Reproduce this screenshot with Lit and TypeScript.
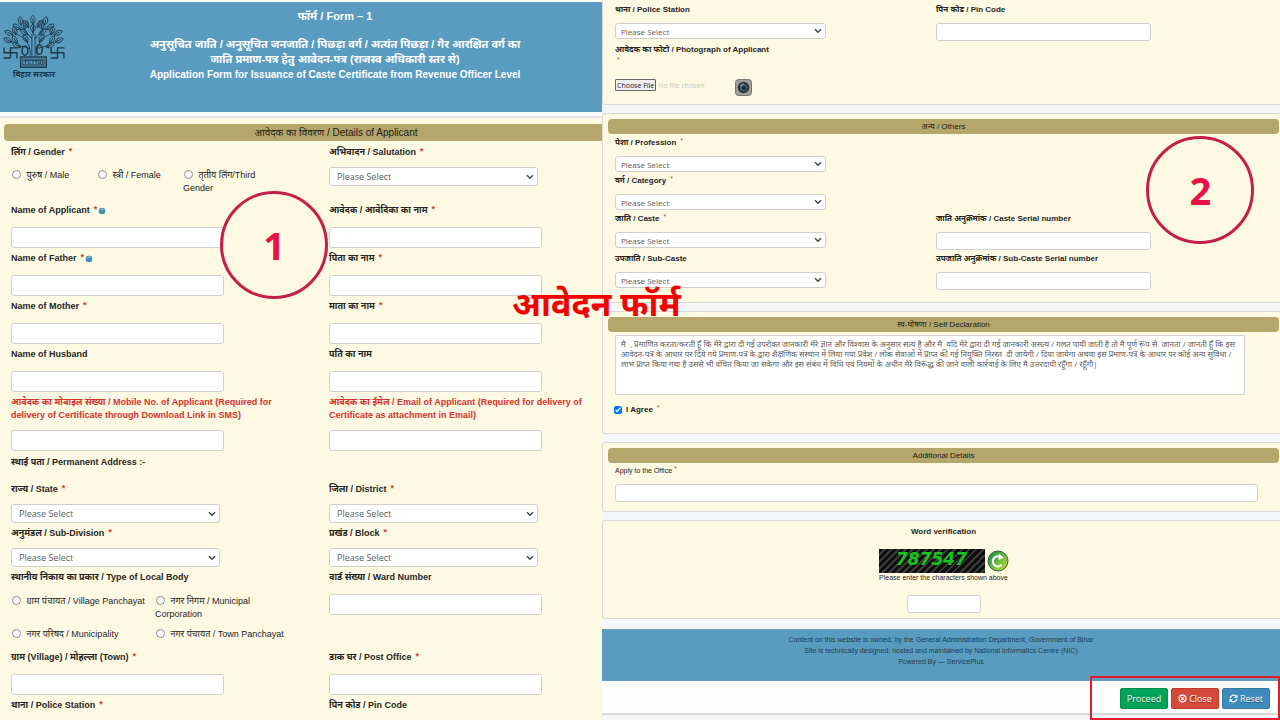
import { LitElement, html, css, svg, nothing } from "lit";
import { customElement } from "lit/decorators.js";
import { classMap } from "lit/directives/class-map.js";

type Kind = "select" | "text" | "none";

interface Field {
  id: string;
  text: string;
  kind: Kind;
  required?: boolean;
  help?: boolean;
  alert?: boolean;
}

const NAME_ROWS: Field[] = [
  { id: "applicant-en", text: "Name of Applicant", kind: "text", required: true, help: true },
  { id: "applicant-hi", text: "आवेदक / आवेदिका का नाम", kind: "text", required: true },
  { id: "father-en", text: "Name of Father", kind: "text", required: true, help: true },
  { id: "father-hi", text: "पिता का नाम", kind: "text", required: true },
  { id: "mother-en", text: "Name of Mother", kind: "text", required: true },
  { id: "mother-hi", text: "माता का नाम", kind: "text", required: true },
  { id: "husband-en", text: "Name of Husband", kind: "text" },
  { id: "husband-hi", text: "पति का नाम", kind: "text" },
  { id: "mobile", text: "आवेदक का मोबाइल संख्या / Mobile No. of Applicant (Required for delivery of Certificate through Download Link in SMS)", kind: "text", alert: true },
  { id: "email", text: "आवेदक का ईमेल / Email of Applicant (Required for delivery of Certificate as attachment in Email)", kind: "text", alert: true },
];

const ADDRESS_ROWS: Field[] = [
  { id: "state", text: "राज्य / State", kind: "select", required: true },
  { id: "district", text: "जिला / District", kind: "select", required: true },
  { id: "subdivision", text: "अनुमंडल / Sub-Division", kind: "select", required: true },
  { id: "block", text: "प्रखंड / Block", kind: "select", required: true },
];

const GENDERS = ["पुरुष / Male", "स्त्री / Female", "तृतीय लिंग/Third Gender"];

const BODIES = [
  "ग्राम पंचायत / Village Panchayat",
  "नगर निगम / Municipal Corporation",
  "नगर परिषद / Municipality",
  "नगर पंचायत / Town Panchayat",
];

const DECLARATION =
  "मै  , प्रमाणित करता/करती हूँ कि मेरे द्वारा दी गई उपरोक्त जानकारी मेरे ज्ञान और विश्वास के अनुसार सत्य है और मै  यदि मेरे द्वारा दी गई जानकारी असत्य / गलत पायी जाती है तो मै पूर्ण रूप से  जानता / जानती हूँ कि इस आवेदन-पत्र के आधार पर दिये गये प्रमाण-पत्र के द्वारा शैक्षणिक संस्थान में लिया गया प्रवेश / लोक सेवाओं में प्राप्त की गई नियुक्ति निरस्त  दी जायेगी / दिया जायेगा अथवा इस प्रमाण-पत्र के आधार पर कोई अन्य सुविधा / लाभ प्राप्त किया गया है उससे भी वंचित किया जा सकेगा और इस संबंध में विधि एवं नियमों के अधीन मेरे विरूद्ध की जाने वाली कार्रवाई के लिए मै उत्तरदायी रहूँगा / रहूँगी|";

const star = html`<span class="star">*</span>`;

function field(f: Field) {
  return html`<div class=${classMap({ field: true, alert: !!f.alert })}>
    <label for=${f.id}>${f.text}${f.required ? star : nothing}${f.help
        ? html`<svg class="help" viewBox="0 0 8 8"><circle cx="4" cy="4" r="3.300" fill="#3d8fb5" /><path d="M2.300 3.400a1.800 1.800 0 0 1 3.200-.5" fill="none" stroke="#b6dcea" /></svg>`
        : nothing}</label>
    ${f.kind === "select"
      ? html`<select id=${f.id}><option>Please Select</option></select>`
      : f.kind === "text"
        ? html`<input id=${f.id} type="text" />`
        : nothing}
  </div>`;
}

const leaf = (x: number, y: number, a: number) =>
  svg`<path d="M0 0C-3 -2.400 -2.600 -5.500 0 -8C2.600 -5.500 3 -2.400 0 0ZM0 0V-5" transform="translate(${x} ${y}) rotate(${a})" />`;

const LEAVES: [number, number, number][] = [
  [29, 14, 0], [25, 17, -40], [33, 17, 38], [24, 24, -55], [35, 24, 52], [29, 22, 0],
  [18, 15, -10], [17, 19, -55], [21, 19, 20], [40, 15, 12], [42, 19, 55], [38, 19, -20],
  [10, 24, -65], [13, 24, -15], [49, 24, 65], [46, 24, 15],
  [9, 31, -65], [14, 32, -30], [50, 31, 65], [45, 32, 30],
  [17, 36, -60], [42, 36, 60], [24, 31, -30], [35, 31, 30],
];

const emblem = html`<svg class="emblem" viewBox="1 5 58 51" role="img" aria-label="Bihar Sarkar">
  <g fill="none" stroke="#183848" stroke-width="0.800" stroke-linecap="round">
    ${LEAVES.map(([x, y, a]) => leaf(x, y, a))}
    <path d="M26 44C27 38 26 33 20 27L11 22M33 44C32 38 34 33 39 27L48 22M28 44V24M31 44V24M29.500 24V14M26 37L15 34M33 37L44 34M28 28L18 17M31 28L41 17" />
    <ellipse cx="21.500" cy="39" rx="2.700" ry="4.400" stroke-width="1.400" />
    <ellipse cx="35" cy="38" rx="2.700" ry="4.400" stroke-width="1.400" />
    <path d="M2 36.500V41H14M8 36.500H14M2 46H8M8 36.500V46M14 41V46" stroke-width="1.300" />
    <path d="M46 36.500V41H58M52 36.500H58M46 46H52M52 36.500V46M58 41V46" stroke-width="1.300" />
    <rect x="17.500" y="45" width="24" height="9.500" stroke-width="1.300" />
    <rect x="19.500" y="47" width="20" height="5.500" />
    <path d="M21 48.500H38M22 48.500V51.500M25 48.500V51.500H27M29 48.500V51.500M32 48.500V51.500M34 48.500V51.500H36V48.500M38 48.500V51.500" />
  </g>
</svg>`;

@customElement("app-root")
export class AppRoot extends LitElement {
  static styles = css`
    :host { display: block; }
    * { box-sizing: border-box; }
    .page {
      position: relative;
      display: grid;
      grid-template-columns: minmax(0, 602fr) minmax(0, 678fr);
      height: 100vh;
      min-height: 720px;
      overflow: hidden;
      background: #fdfdfd;
      color: #26261f;
      font-family: "Liberation Sans", "Noto Sans", sans-serif;
    }
    .left, .right { min-width: 0; }
    .left { font-size: 9px; line-height: 13px; display: flex; flex-direction: column; padding-top: 2px; }
    .banner {
      display: grid;
      grid-template-columns: 68px 1fr;
      min-height: 110px;
      background: #5a9bc0;
      color: #fff;
    }
    .brand { display: flex; flex-direction: column; align-items: center; padding-top: 12px; color: #183848; font-size: 8px; line-height: 11px; font-weight: 700; }
    .emblem { width: 62px; height: 55px; }
    .headings { text-align: center; padding-top: 7px; font-size: 11px; line-height: 15px; font-weight: 700; }
    .headings h1, .headings h2 { margin: 0; font: inherit; }
    .headings h1 { padding-bottom: 13px; }
    .latin { font-size: 10px; }
    .applicant { flex: 1; margin-top: 4px; padding: 6px 0 0 4px; background: #fef9e3; border-top: 2px solid #e3e6e3; }
    .bar {
      margin: 0;
      background: #b5a76c;
      border-radius: 4px;
      text-align: center;
      font-weight: 400;
      color: #1c1a10;
    }
    .left .bar { border-radius: 4px 0 0 4px; font-size: 10px; line-height: 17px; padding-left: 66px; }
    .cols { display: grid; grid-template-columns: 318fr 273fr; padding-left: 7px; }
    .left .cols { padding-top: 5px; }
    .field { display: flex; flex-direction: column; align-items: flex-start; }
    label, .caption { font-weight: 700; }
    .star { color: #d0392b; font-size: 9px; line-height: 8px; font-weight: 700; margin-left: 4px; vertical-align: 1px; }
    .help { width: 8px; height: 8px; margin-left: 1px; vertical-align: -2px; }
    .alert label { color: #d6322c; max-width: 264px; }
    input[type="text"], select, textarea {
      font-family: "Open Sans", "Noto Sans", sans-serif;
      background-color: #fff;
      border: 1px solid #cfd0cc;
      border-radius: 3px;
      color: #5c5c5c;
      max-width: 100%;
    }
    select {
      appearance: none;
      padding: 0 7px;
      background-image: url("data:image/svg+xml,%3Csvg xmlns='http://www.w3.org/2000/svg' viewBox='0 0 8 6'%3E%3Cpath d='M1 1.300l3 3 3-3' fill='none' stroke='%23444' stroke-width='1.500'/%3E%3C/svg%3E");
      background-repeat: no-repeat;
      background-position: right 3px center;
      background-size: 8px 6px;
    }
    .left input[type="text"] { width: 213px; height: 21px; margin: 10px 0 4px; }
    .left .alert input[type="text"] { margin-top: 8px; }
    .left select { width: 209px; height: 19px; margin: 8px 0 4px; font-size: 9px; }
    .choices { border: 0; margin: 0; padding: 0; min-width: 0; }
    .choices legend { padding: 0; font-weight: 700; }
    .options { display: grid; padding-top: 10px; }
    .three { grid-template-columns: 86px 86px 76px; padding-bottom: 9px; }
    .two { grid-template-columns: 144px 140px; row-gap: 7px; padding-bottom: 10px; padding-top: 11px; }
    .options label { font-weight: 400; }
    input[type="radio"] { appearance: none; width: 9px; height: 9px; margin: 0 3px 0 1px; border: 1px solid #8d8d8d; border-radius: 50%; background: #fff; vertical-align: -1px; }
    .section-name { grid-column: 1 / -1; font-size: 9px; font-weight: 700; margin: 1px 0 14px; line-height: 13px; }

    .right { font-size: 8px; line-height: 12px; display: flex; flex-direction: column; gap: 8px; background: #f5f6f8; }
    .card { background: #fef9e3; border: 1px solid #d8d9d6; border-right: 0; border-radius: 3px 0 0 3px; padding: 5px 1px 0 5px; }
    .first { border-top: 0; padding-top: 4px; border-top-left-radius: 0; }
    .right .bar { font-size: 8px; line-height: 15px; }
    .right .cols { grid-template-columns: 321fr 343fr; padding-top: 3px; }
    .right .star { font-size: 7px; font-weight: 400; margin-left: 4px; vertical-align: 2px; }
    .right select { width: 211px; height: 16px; margin: 7px 0 3px; font-size: 8px; padding: 0 5px; }
    .right .cols input[type="text"] { width: 215px; height: 18px; margin: 7px 0 3px; }
    .right .first .cols { padding-top: 0; }
    .photo { grid-column: 1 / -1; padding: 0 0 8px; }
    .photo .star { display: block; margin-left: 2px; }
    .upload { display: flex; align-items: flex-start; gap: 8px; padding-top: 15px; }
    input[type="file"] { width: 112px; font: 7px "Open Sans", sans-serif; color: #c9c9c0; }
    input[type="file"]::file-selector-button { font: 7px "Open Sans", sans-serif; height: 12px; padding: 0 1px; margin: 0 2px 0 0; border: 1px solid #666; border-radius: 1px; background: #efefef; color: #222; }
    .camera { width: 17px; height: 17px; }
    .others { padding-bottom: 9px; }
    .others .field:nth-child(-n + 3) { grid-column: 1; }
    textarea { display: block; width: calc(100% - 41px); height: 60px; margin: 3px 0 8px 7px; padding: 3px 5px; resize: none; overflow: hidden; font-size: 8px; line-height: 10px; border-radius: 1px; }
    .agree { display: flex; align-items: center; padding: 1px 0 17px 6px; }
    .agree input { width: 8px; height: 8px; margin: 0 4px 0 0; }
    .office { display: block; font-size: 7px; font-weight: 400; padding: 2px 0 0 7px; }
    .right .office .star { margin-left: 2px; }
    .additional input[type="text"] { display: block; width: calc(100% - 28px); height: 18px; margin: 7px 0 9px 7px; }
    .captcha { display: flex; flex-direction: column; align-items: center; padding-bottom: 5px; }
    .captcha h3 { margin: 0; font-size: 8px; }
    .challenge { display: flex; align-items: center; gap: 2px; padding: 11px 0 0; }
    .code { width: 106px; height: 24px; display: grid; place-items: start center; background: repeating-linear-gradient(135deg, #0d0d0d 0 3px, #3b3b3b 3px 5px); color: #15c51c; font: italic 700 17px/21px "DejaVu Sans", sans-serif; }
    .refresh { border: 0; padding: 0; background: none; width: 22px; height: 22px; display: block; }
    .captcha label { font-weight: 400; font-size: 7px; line-height: 9px; }
    .captcha input[type="text"] { width: 74px; height: 18px; margin-top: 13px; }
    .foot { background: #fefefe; border-bottom: 2px solid #d9d9d9; margin-top: 2px; }
    .credits { background: #5a9bc0; border-top: 1px solid #6f9fb8; color: #1d3e50; text-align: center; font-size: 7px; line-height: 11px; padding: 4px 0 14px; }
    .credits p { margin: 0; }
    .actions { display: flex; justify-content: flex-end; gap: 3px; padding: 7px 10px 4px 0; }
    .actions button { display: flex; align-items: center; justify-content: center; gap: 2px; width: 48px; height: 21px; padding: 0; border: 1px solid; border-radius: 2px; color: #fff; font: 9px "Open Sans", sans-serif; text-shadow: 0 1px 1px #0006; }
    .go { background: #00a35a; border-color: #008d4c !important; }
    .close { background: #d5493a; border-color: #c23a2c !important; }
    .reset { background: #3f8bbd; border-color: #357ca5 !important; }
    .actions svg { width: 9px; height: 9px; }

    .mark { position: absolute; width: 108px; height: 108px; border: 3px solid #c41f48; border-radius: 50%; display: grid; place-items: center; color: #ea1144; font: 700 38px/50px "Open Sans", sans-serif; }
    .one { left: 17.200%; top: 191px; }
    .two-mark { right: 2%; top: 136px; }
    .title { position: absolute; left: 40%; top: 280px; margin: 0; color: #f50000; font: 700 34px/46px "Noto Sans", sans-serif; white-space: nowrap; }
    .frame { position: absolute; right: 0; bottom: 0; width: 190px; height: 44px; border: 2px solid #e31b2c; pointer-events: none; }
  `;

  render() {
    return html`<main class="page">
      <section class="left">
        <header class="banner">
          <div class="brand">${emblem}<span>बिहार सरकार</span></div>
          <div class="headings">
            <h1>फॉर्म / Form – 1</h1>
            <h2>अनुसूचित जाति / अनुसूचित जनजाति / पिछड़ा वर्ग / अत्यंत पिछड़ा / गैर आरक्षित वर्ग का<br />जाति प्रमाण-पत्र हेतु आवेदन-पत्र (राजस्व अधिकारी स्तर से)<br /><span class="latin">Application Form for Issuance of Caste Certificate from Revenue Officer Level</span></h2>
          </div>
        </header>
        <form class="applicant">
          <h2 class="bar">आवेदक का विवरण / Details of Applicant</h2>
          <div class="cols">
            <fieldset class="choices">
              <legend>लिंग / Gender${star}</legend>
              <div class="options three">
                ${GENDERS.map((g) => html`<label><input type="radio" name="gender" /> ${g}</label>`)}
              </div>
            </fieldset>
            ${field({ id: "salutation", text: "अभिवादन / Salutation", kind: "select", required: true })}
            ${NAME_ROWS.map(field)}
            <h3 class="section-name">स्थाई पता / Permanent Address :-</h3>
            ${ADDRESS_ROWS.map(field)}
            <fieldset class="choices">
              <legend>स्थानीय निकाय का प्रकार / Type of Local Body</legend>
              <div class="options two">
                ${BODIES.map((b) => html`<label><input type="radio" name="body" /> ${b}</label>`)}
              </div>
            </fieldset>
            ${field({ id: "ward", text: "वार्ड संख्या / Ward Number", kind: "text" })}
            ${field({ id: "village", text: "ग्राम (Village) / मोहल्ला (Town)", kind: "text", required: true })}
            ${field({ id: "post", text: "डाक घर / Post Office", kind: "text", required: true })}
            <div class="caption">थाना / Police Station${star}</div>
            <div class="caption">पिन कोड / Pin Code</div>
          </div>
        </form>
      </section>

      <section class="right">
        <div class="card first">
          <div class="cols">
            ${field({ id: "police", text: "थाना / Police Station", kind: "select" })}
            ${field({ id: "pin", text: "पिन कोड / Pin Code", kind: "text" })}
            <div class="photo">
              <label for="photo">आवेदक का फोटो / Photograph of Applicant${star}</label>
              <div class="upload">
                <input id="photo" type="file" />
                <svg class="camera" viewBox="0 0 17 17"><rect x="0.500" y="0.500" width="16" height="16" rx="3" fill="#a19d98" stroke="#77736f" /><circle cx="8.500" cy="8.500" r="5.800" fill="#27383f" /><circle cx="8.500" cy="8.500" r="3.500" fill="#426873" /><circle cx="9" cy="9" r="2" fill="#14272f" /><path d="M5.500 7a3.500 3.500 0 0 1 3-2" fill="none" stroke="#a9c3ca" /></svg>
              </div>
            </div>
          </div>
        </div>
        <div class="card others">
          <h2 class="bar">अन्य / Others</h2>
          <div class="cols">
            ${field({ id: "profession", text: "पेशा / Profession", kind: "select", required: true })}
            ${field({ id: "category", text: "वर्ग / Category", kind: "select", required: true })}
            ${field({ id: "caste", text: "जाति / Caste", kind: "select", required: true })}
            ${field({ id: "caste-no", text: "जाति अनुक्रमांक / Caste Serial number", kind: "text" })}
            ${field({ id: "subcaste", text: "उपजाति / Sub-Caste", kind: "select" })}
            ${field({ id: "subcaste-no", text: "उपजाति अनुक्रमांक / Sub-Caste Serial number", kind: "text" })}
          </div>
        </div>
        <div class="card">
          <h2 class="bar">स्व-घोषणा / Self Declaration</h2>
          <textarea aria-label="Self Declaration" .value=${DECLARATION}></textarea>
          <div class="agree"><input id="agree" type="checkbox" checked /><label for="agree">I Agree${star}</label></div>
        </div>
        <div class="card additional">
          <h2 class="bar">Additional Details</h2>
          <label class="office" for="office">Apply to the Office${star}</label>
          <input id="office" type="text" />
        </div>
        <div class="card captcha">
          <h3>Word verification</h3>
          <div class="challenge">
            <div class="code">787547</div>
            <button class="refresh" type="button" aria-label="Refresh">
              <svg viewBox="0 0 22 22"><defs><linearGradient id="g" x1="0" y1="0" x2="1" y2="1"><stop offset="0.200" stop-color="#2f9b4a" /><stop offset="1" stop-color="#c6e62e" /></linearGradient></defs><circle cx="11" cy="11" r="10" fill="url(#g)" stroke="#31633a" /><path d="M14.500 14.800A5 5 0 1 1 13 6.800" fill="none" stroke="#fff" stroke-width="2.200" /><path d="M12 3.800L17 7.800L11.500 10Z" fill="#fff" /></svg>
            </button>
          </div>
          <label for="word">Please enter the characters shown above</label>
          <input id="word" type="text" />
        </div>
        <footer class="foot">
          <div class="credits">
            <p>Content on this website is owned, by the General Administration Department, Government of Bihar</p>
            <p>Site is technically designed, hosted and maintained by National Informatics Centre (NIC)</p>
            <p>Powered By — ServicePlus</p>
          </div>
          <div class="actions">
            <button class="go" type="button">Proceed</button>
            <button class="close" type="button"><svg viewBox="0 0 10 10"><circle cx="5" cy="5" r="3.700" fill="none" stroke="#fff" stroke-width="1.500" /><path d="M3.500 3.500l3 3m0-3l-3 3" stroke="#fff" stroke-width="1.300" /></svg>Close</button>
            <button class="reset" type="button"><svg viewBox="0 0 10 10" fill="none" stroke="#fff" stroke-width="1.400"><path d="M1.300 4.500A3.800 3.800 0 0 1 8 2.700M8.700 5.500A3.800 3.800 0 0 1 2 7.300" /><path d="M9.500 0.500V4.200H5.800ZM0.500 9.500V5.800H4.200Z" fill="#fff" stroke="none" /></svg>Reset</button>
          </div>
        </footer>
      </section>

      <div class="mark one">1</div>
      <div class="mark two-mark">2</div>
      <p class="title">आवेदन फॉर्म</p>
      <div class="frame"></div>
    </main>`;
  }
}
